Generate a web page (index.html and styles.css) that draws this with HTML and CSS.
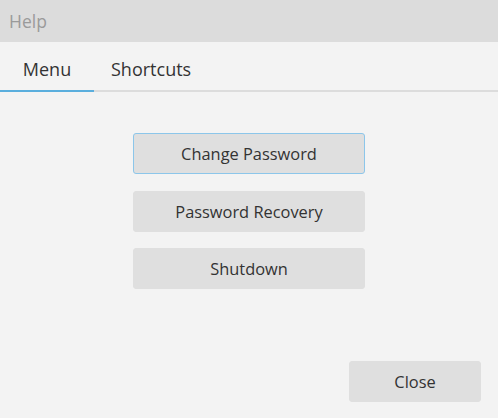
FILE: index.html
```html
<!DOCTYPE html>
<html>
<head>
<meta charset="utf-8">
<link rel="stylesheet" href="styles.css">
</head>
<body>
<div class="window">
  <div class="titlebar">Help</div>
  <div class="tabs">
    <div class="tab active">Menu</div>
    <div class="tab">Shortcuts</div>
  </div>
  <div class="content">
    <div class="menu">
      <button class="btn focused">Change Password</button>
      <button class="btn">Password Recovery</button>
      <button class="btn">Shutdown</button>
    </div>
    <div class="footer">
      <button class="btn close">Close</button>
    </div>
  </div>
</div>
</body>
</html>
```
FILE: styles.css
```css
html, body {
  margin: 0;
  padding: 0;
  width: 498px;
  height: 418px;
  overflow: hidden;
  background: #f3f3f3;
  font-family: "Open Sans", "Noto Sans", sans-serif;
}
.window {
  display: flex;
  flex-direction: column;
  height: 418px;
}
.titlebar {
  height: 42px;
  background: #dcdcdc;
  color: #9a9a9a;
  font-size: 17.5px;
  line-height: 42px;
  padding-left: 9px;
}
.tabs {
  display: flex;
  height: 48px;
  border-bottom: 2px solid #dcdcdc;
}
.tab {
  font-size: 18px;
  color: #333;
  line-height: 54px;
  height: 48px;
  padding: 0 17px;
}
.tab.active {
  width: 60px;
  padding: 0 17px;
  text-align: center;
  border-bottom: 2px solid #5aaedd;
  margin-bottom: -2px;
}
.content {
  flex: 1;
  display: flex;
  flex-direction: column;
}
.menu {
  display: flex;
  flex-direction: column;
  align-items: center;
  gap: 16.5px;
  padding-top: 41px;
}
.btn {
  width: 232px;
  height: 41px;
  background: #dfdfdf;
  border: 1px solid #dfdfdf;
  border-radius: 3px;
  font-family: inherit;
  font-size: 16.4px;
  color: #333;
  padding: 0;
}
.btn.focused {
  border-color: #8cc6ea;
}
.footer {
  margin-top: auto;
  display: flex;
  justify-content: flex-end;
  padding: 0 17px 16px 0;
}
.btn.close {
  width: 132px;
  height: 41px;
}
```
